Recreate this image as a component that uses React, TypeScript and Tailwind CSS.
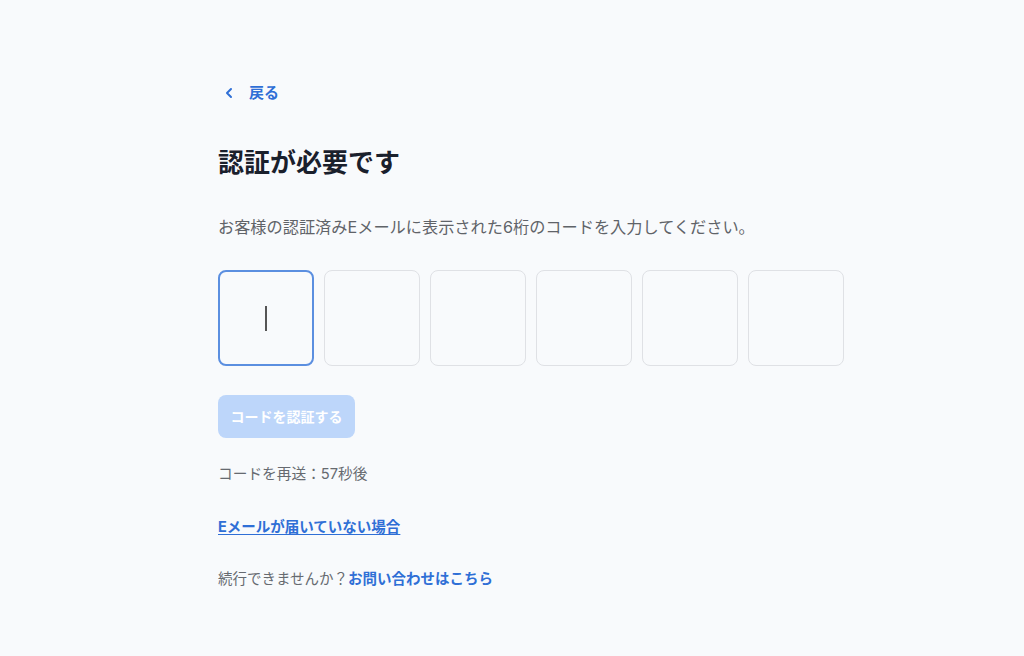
import { ChevronLeft } from "lucide-react";

const font = "font-['Inter','Noto_Sans_CJK_JP',sans-serif]";

const CodeBoxes = () => {
  return (
    <div className="flex gap-[10px]">
      {[0, 1, 2, 3, 4, 5].map((i) => (
        <div
          key={i}
          className={`flex h-[96px] w-[96px] items-center justify-center rounded-[8px] bg-[#f8fafc] ${
            i === 0 ? "border-2 border-[#5b8fe0]" : "border border-[#dfe1e5]"
          }`}
        >
          {i === 0 && <span className="h-[25px] w-[2px] bg-[#555]" />}
        </div>
      ))}
    </div>
  );
};

export default function App() {
  return (
    <div className={`min-h-[656px] w-full bg-[#f8fafc] ${font}`}>
      <div className="ml-[218px] flex flex-col pt-[82px]">
        {/* Back link */}
        <a className="flex h-[22px] items-center gap-[12px] text-[15px] font-bold text-[#2f6fd6]">
          <ChevronLeft className="ml-[3px] h-[16px] w-[16px]" strokeWidth={3} />
          <span>戻る</span>
        </a>

        <h1 className="mt-[41px] text-[26px] font-bold leading-[36px] text-[#1a202c]">認証が必要です</h1>

        <p className="mt-[34px] text-[16.2px] leading-[24px] text-[#5f6368]">
          お客様の認証済みEメールに表示された6桁のコードを入力してください。
        </p>

        <div className="mt-[31px]">
          <CodeBoxes />
        </div>

        <button
          disabled
          className="mt-[29px] h-[43px] w-[137px] rounded-[8px] bg-[#bdd6fa] text-[14px] font-bold text-white"
        >
          コードを認証する
        </button>

        <p className="mt-[25px] text-[14.7px] leading-[22px] text-[#666a70]">コードを再送：57秒後</p>

        <a className="mt-[31px] w-fit text-[14.5px] font-bold leading-[22px] text-[#2f6fd6] underline underline-offset-2">
          Eメールが届いていない場合
        </a>

        <p className="mt-[30px] text-[14.5px] leading-[22px] text-[#666a70]">
          続行できませんか？<a className="font-bold text-[#2f6fd6]">お問い合わせはこちら</a>
        </p>
      </div>
    </div>
  );
}
